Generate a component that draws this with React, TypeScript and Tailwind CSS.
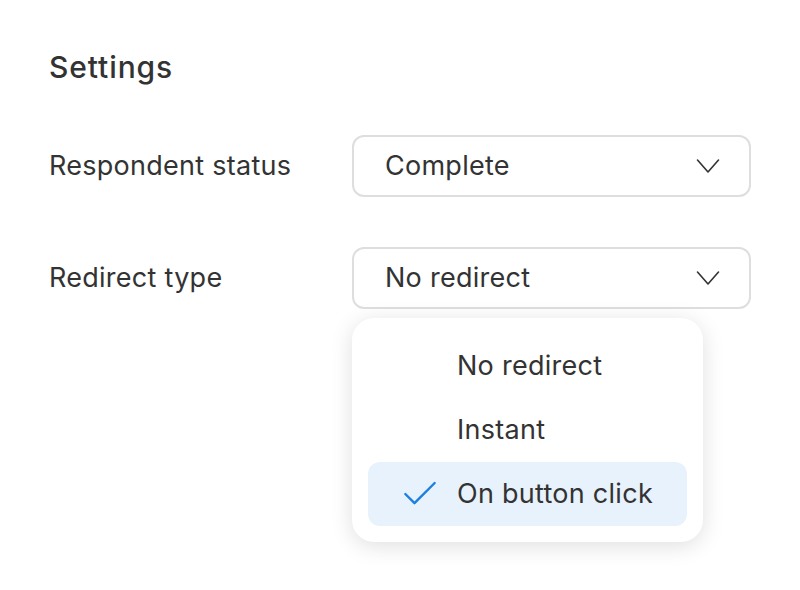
import { Check } from 'lucide-react';

const font = { fontFamily: 'Inter, "Noto Sans", sans-serif' };

const Chevron = () => (
  <svg width="24" height="16" viewBox="0 0 24 16" fill="none" className="text-[#333333]">
    <polyline points="1.5,2 12,14 22.5,2" stroke="currentColor" strokeWidth="1.6" strokeLinecap="round" strokeLinejoin="round" />
  </svg>
);

const Select = ({ value }: { value: string }) => (
  <div className="flex h-[62px] w-[399px] items-center justify-between rounded-[12px] border-2 border-[#dedede] bg-white pl-[31px] pr-[29px]">
    <span className="text-[27px] tracking-[0.01em] text-[#333333]">{value}</span>
    <Chevron />
  </div>
);

const options = ['No redirect', 'Instant', 'On button click'];

export default function App() {
  const selected = 'On button click';

  return (
    <div className="min-h-screen bg-white px-[49px] pt-[47px]" style={font}>
      <h2 className="text-[30px] font-medium leading-[40px] tracking-[0.03em] text-[#333333]">Settings</h2>

      <div className="mt-[48px] flex flex-col gap-[50px]">
        <div className="flex items-center">
          <label className="w-[303px] text-[27px] tracking-[0.01em] text-[#333333]">Respondent status</label>
          <Select value="Complete" />
        </div>

        <div className="flex items-center">
          <label className="w-[303px] text-[27px] tracking-[0.01em] text-[#333333]">Redirect type</label>
          <div className="relative">
            <Select value="No redirect" />
            {/* Open menu */}
            <div className="absolute left-0 top-[71px] w-[351px] rounded-[22px] bg-white p-[16px] shadow-[0_4px_22px_rgba(0,0,0,0.13)]">
              {options.map((opt) => (
                <div
                  key={opt}
                  className={`flex h-[64px] items-center rounded-[12px] ${opt === selected ? 'bg-[#e8f2fc]' : ''}`}
                >
                  <div className="flex w-[89px] justify-end pr-[15px]">
                    {opt === selected && <Check className="h-[44px] w-[44px] text-[#1a7fe0]" strokeWidth={1.3} />}
                  </div>
                  <span className="text-[27px] tracking-[0.01em] text-[#333333]">{opt}</span>
                </div>
              ))}
            </div>
          </div>
        </div>
      </div>
    </div>
  );
}
